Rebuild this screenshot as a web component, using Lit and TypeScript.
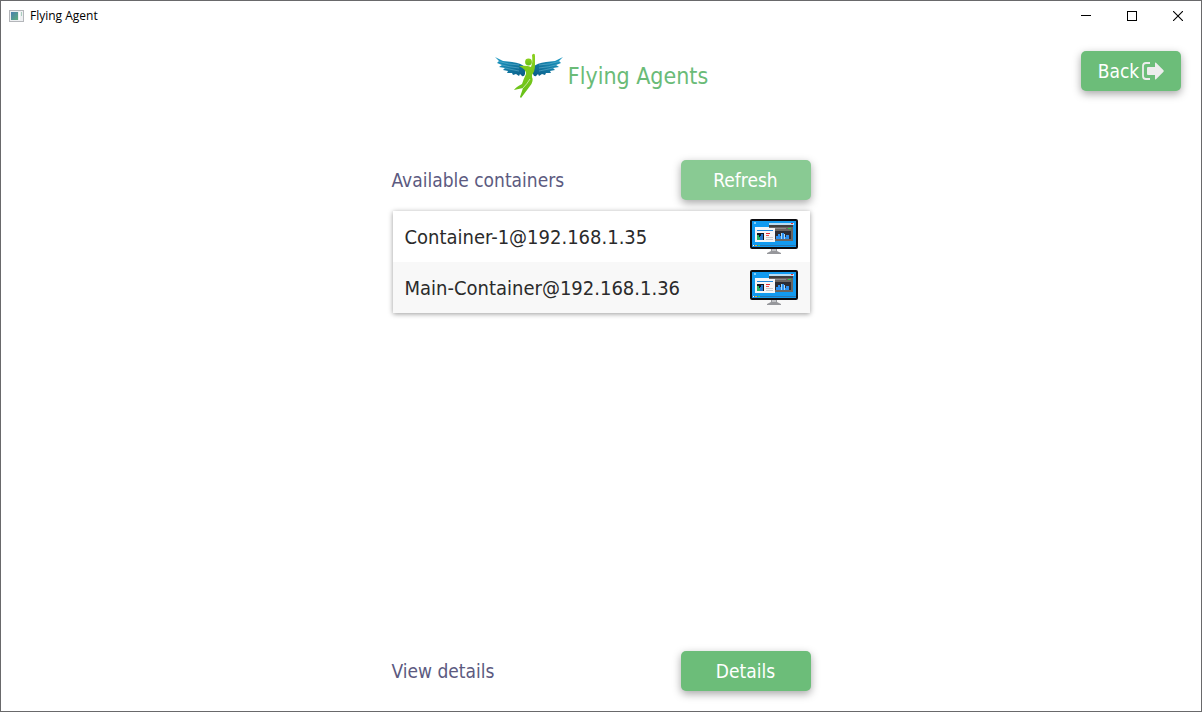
import { LitElement, html, svg, css } from "lit";
import { customElement, state } from "lit/decorators.js";

const monitorIcon = () => html`
  <svg class="monitor" viewBox="0 0 48 36" width="48" height="36" aria-hidden="true">
    <rect x="0" y="0" width="48" height="30" rx="2" fill="#0c0c10" />
    <rect x="2" y="2" width="44" height="26" fill="#129af0" />
    <rect x="4" y="3" width="2" height="2" fill="#7fd0fa" />
    <rect x="19" y="4" width="25" height="2" fill="#b9dcf2" />
    <rect x="41" y="4" width="2" height="1" fill="#f03030" />
    <rect x="19" y="6" width="24" height="16" fill="#6a6562" />
    <rect x="19" y="6" width="24" height="2" fill="#3f3d3d" />
    <rect x="22" y="9" width="14" height="1" fill="#8c8c8e" />
    <rect x="38" y="9" width="3" height="1" fill="#28cc4a" />
    <rect x="25" y="12" width="16" height="8" fill="#2c2c34" />
    <path d="M26 20v-3h2v-2h2v2h1v-3h3v4h2v-2h3v4z" fill="#2a8ff0" />
    <path d="M31 14h1v6h-1zM34 15h1v5h-1z" fill="#a7d8f5" />
    <path d="M5 8h14v1h6v14H5z" fill="#f5f5f7" />
    <rect x="7" y="11" width="16" height="1" fill="#2187dd" />
    <rect x="7" y="14" width="7" height="7" fill="#12131c" />
    <path d="M7 21v-5h2v2h1v3z" fill="#25b467" />
    <path d="M10 21v-4h1v-2h2v6z" fill="#2275cf" />
    <rect x="16" y="14" width="4" height="1" fill="#e32636" />
    <rect x="16" y="16" width="3" height="1" fill="#ef4b50" />
    <path d="M16 18h7v1h-7zM16 20h7v1h-7z" fill="#c7c7cb" />
    <rect x="2" y="26" width="44" height="1" fill="#2b78b4" />
    <rect x="3" y="26" width="1" height="1" fill="#fff" />
    <rect x="5" y="26" width="2" height="1" fill="#f1ab32" />
    <rect x="8" y="26" width="2" height="1" fill="#45c853" />
    <path d="M21 30h6v2l4 2v1H17v-1l4-2z" fill="#96979b" />
    <path d="M22 30h4v2h-4z" fill="#c2c3c6" />
  </svg>
`;

const wing = svg`
  <path d="M1 5L9 9L18 10Q27 11 31 15L31 22Q30 25 28 24L26 22L25 24L22 22L19 23L18 21L13 21L14 19L9 18L11 16L5 15L8 13L3 11L5 9Z" fill="url(#wing)" />
  <path d="M5 9.5Q14 12.5 25 13M8 13Q15 15 25 16M11 16Q17 17.5 25 19" fill="none" stroke="#78bfd6" stroke-width=".5" />
`;

@customElement("app-root")
export class AppRoot extends LitElement {
  @state() private containers = [
    "Container-1@192.168.1.35",
    "Main-Container@192.168.1.36",
  ];

  static styles = css`
    :host {
      display: flex;
      flex-direction: column;
      box-sizing: border-box;
      min-height: 100vh;
      border: 1px solid #69696b;
      background: #fff;
      color: #2b2b2b;
      font-family: "DejaVu Sans Condensed", "DejaVu Sans", sans-serif;
      font-size: 19px;
      line-height: 24px;
    }
    .titlebar {
      display: flex;
      align-items: center;
      height: 30px;
      padding-left: 8px;
      color: #000;
      font-family: "Open Sans", sans-serif;
      font-size: 12px;
      line-height: 16px;
    }
    .caption { flex: 1; padding-left: 6px; }
    .window-button {
      display: grid;
      place-items: center;
      width: 46px;
      height: 30px;
      padding: 0;
      border: 0;
      background: none;
    }
    .header {
      display: grid;
      grid-template-columns: 1fr auto 1fr;
      align-items: start;
      padding: 20px;
    }
    .brand {
      grid-column: 2;
      display: flex;
      align-items: center;
      gap: 4px;
      height: 50px;
    }
    .brand-name {
      margin: 0;
      color: #6abb77;
      font-size: 23px;
      font-weight: 400;
      line-height: 32px;
    }
    .button {
      display: flex;
      align-items: center;
      justify-content: center;
      gap: 3px;
      width: 130px;
      height: 40px;
      padding: 0;
      border: 0;
      border-radius: 5px;
      background: #6cbd79;
      box-shadow: 0 3px 8px rgba(0, 0, 0, 0.35);
      color: #fff;
      font: inherit;
    }
    .back { justify-self: end; width: 100px; }
    .hover { background: #89ca93; }
    .content {
      display: flex;
      flex: 1;
      flex-direction: column;
      width: 100%;
      max-width: 419px;
      margin: 0 auto;
      padding: 39px 0 20px;
      box-sizing: border-box;
    }
    .row {
      display: flex;
      align-items: center;
      justify-content: space-between;
    }
    .label {
      margin: 0;
      color: #5c5a80;
      font-size: inherit;
      font-weight: 400;
    }
    .list {
      margin: 11px 1px 0;
      padding: 0;
      list-style: none;
      font-size: 20px;
      box-shadow: 0 1px 5px rgba(0, 0, 0, 0.4);
    }
    .item {
      display: flex;
      align-items: center;
      justify-content: space-between;
      height: 51px;
      padding: 0 12px;
      background: #fff;
    }
    .item:nth-child(even) { background: #f8f8f8; }
    .monitor { display: block; }
    .footer { margin-top: auto; }
  `;

  render() {
    return html`
      <div class="titlebar">
        <svg width="15" height="12" viewBox="0 0 15 12" aria-hidden="true">
          <defs>
            <linearGradient id="pane" x2="1" y2="1">
              <stop stop-color="#4a7fb0" /><stop offset="1" stop-color="#5fae7c" />
            </linearGradient>
          </defs>
          <rect x=".5" y=".5" width="14" height="11" fill="#eef0f2" stroke="#b4b6ba" />
          <rect x="2" y="2" width="7" height="8" fill="url(#pane)" />
          <rect x="10" y="2" width="1" height="8" fill="#fff" />
          <rect x="12" y="2" width="1" height="4" fill="#a9cdbd" />
        </svg>
        <span class="caption">Flying Agent</span>
        <button class="window-button" aria-label="Minimize">
          <svg width="10" height="10" shape-rendering="crispEdges"><path d="M0 4.5h10" stroke="#000" /></svg>
        </button>
        <button class="window-button" aria-label="Maximize">
          <svg width="10" height="10"><rect x=".5" y=".5" width="9" height="9" fill="none" stroke="#000" /></svg>
        </button>
        <button class="window-button" aria-label="Close">
          <svg width="10" height="10"><path d="M0 0l10 10M10 0L0 10" stroke="#000" stroke-width="1.1" /></svg>
        </button>
      </div>

      <header class="header">
        <div class="brand">
          <svg width="70" height="48" viewBox="0 0 70 48" aria-hidden="true">
            <defs>
              <linearGradient id="wing" x2="1" y2="1">
                <stop stop-color="#1c9cc6" /><stop offset="1" stop-color="#0b5c86" />
              </linearGradient>
              <linearGradient id="body" x2="0" y2="1">
                <stop stop-color="#8ad01e" /><stop offset="1" stop-color="#66c018" />
              </linearGradient>
            </defs>
            ${wing}
            <g transform="translate(70 0) scale(-1 1)">${wing}</g>
            <g fill="url(#body)">
              <circle cx="34.5" cy="10" r="3.4" />
              <path d="M39 2Q41 1 41 4L41 13Q41 19 38 23L38 25Q40 29 36 34L27 46L26 45Q28 39 29 36L20 38Q22 35 28 32Q30 26 32 22Q32 17 25 14Q33 13 37 15Q39 10 38 3Z" />
            </g>
            <path d="M36 27Q33 32 29 36" fill="none" stroke="#fff" stroke-width=".6" />
          </svg>
          <h1 class="brand-name">Flying Agents</h1>
        </div>
        <button class="button back">
          <span>Back</span>
          <svg width="22" height="18" viewBox="0 0 22 18" aria-hidden="true">
            <path d="M8 1H4Q1 1 1 4V14Q1 17 4 17H8" fill="none" stroke="#ededed" stroke-width="1.8" />
            <path d="M6 5H13V1Q13 0 14 .7L21.5 8.3Q22 9 21.5 9.7L14 17.3Q13 18 13 17V13H6Q5 13 5 12V6Q5 5 6 5Z" fill="#ededed" />
          </svg>
        </button>
      </header>

      <main class="content">
        <div class="row">
          <h2 class="label">Available containers</h2>
          <button class="button hover">Refresh</button>
        </div>
        <ul class="list">
          ${this.containers.map(
            (name) => html`<li class="item"><span>${name}</span>${monitorIcon()}</li>`
          )}
        </ul>
        <div class="row footer">
          <span class="label">View details</span>
          <button class="button">Details</button>
        </div>
      </main>
    `;
  }
}
